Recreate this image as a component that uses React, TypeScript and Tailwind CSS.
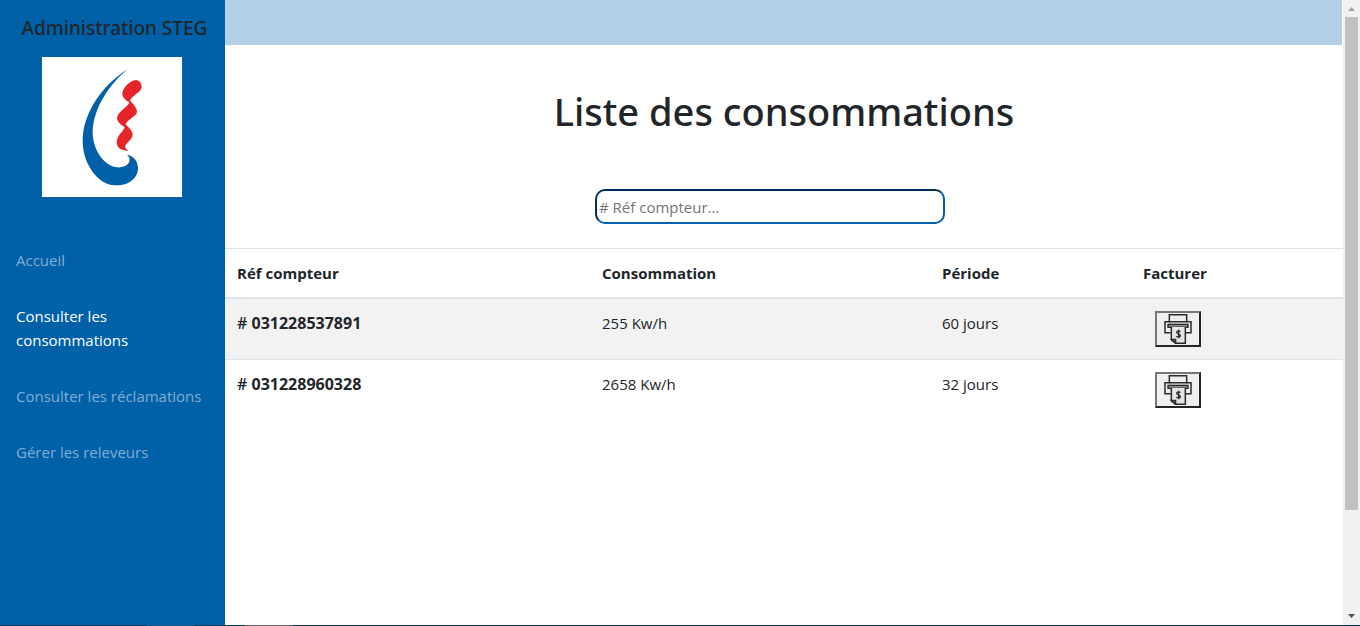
import React, { useState } from "react";
import clsx from "clsx";

type Consommation = { ref: string; valeur: string; periode: string };

const consommations: Consommation[] = [
  { ref: "031228537891", valeur: "255 Kw/h", periode: "60 jours" },
  { ref: "031228960328", valeur: "2658 Kw/h", periode: "32 jours" },
];

const liens = [
  { label: "Accueil", active: false },
  { label: "Consulter les consommations", active: true },
  { label: "Consulter les réclamations", active: false },
  { label: "Gérer les releveurs", active: false },
];

function Logo() {
  return (
    <svg viewBox="126 171 420 420" className="size-[140px] bg-white" role="img" aria-label="STEG">
      <path
        fill="#0060a8"
        d="M384 206C335 238 293 281 268 336C251 373 246 405 249 440C254 492 291 553 345 556C388 558 415 532 414 503C413 482 400 467 380 464C389 470 391 480 386 489C379 499 366 503 350 502C309 496 279 447 278 399C278 322 334 247 384 206Z"
      />
      <path
        fill="#e52528"
        d="M407 240C417 240 425 249 425 261C424 277 396 286 390 302C398 309 411 323 411 335C410 349 381 357 377 374C386 380 398 393 398 404C396 420 378 428 376 438C375 446 380 450 386 452C366 454 350 444 350 427C351 404 371 395 374 381C364 376 351 365 351 354C352 335 385 321 388 307C377 301 367 291 367 281C369 260 394 241 407 240Z"
      />
    </svg>
  );
}

function PrinterIcon() {
  return (
    <svg viewBox="39 27 90 90" className="size-[30px]" fill="none" stroke="#2b2b2b" strokeWidth="4.5" aria-hidden="true">
      <path d="M58 52V29H110V52" />
      <path d="M62 83H45V50H123V83H108" />
      <rect x="54" y="58" width="60" height="9" fill="#888" strokeWidth="4" />
      <path d="M64 66V105L77 115H106V66" fill="#e4e4e4" />
      <path d="M64 103H77V115Z" fill="#777" strokeWidth="4" />
      <path d="M91 80C88 76 80 77 80 82C80 88 91 86 91 92C91 97 82 98 79 93M86 74V100" strokeWidth="4" />
    </svg>
  );
}

function Scrollbar() {
  return (
    <div className="flex w-[17px] shrink-0 flex-col items-center bg-[#f1f1f1]" aria-hidden="true">
      <svg viewBox="0 0 17 17" className="h-[17px] w-full shrink-0">
        <path d="M5 11L8.500 7L12 11Z" fill="#a3a3a3" />
      </svg>
      <div className="flex w-full grow flex-col px-[2px]">
        <div className="h-5/6 bg-[#c1c1c1]" />
      </div>
      <svg viewBox="0 0 17 17" className="h-[17px] w-full shrink-0">
        <path d="M5 6L8.500 10L12 6Z" fill="#505050" />
      </svg>
    </div>
  );
}

export default function App() {
  const [filtre, setFiltre] = useState("");
  const lignes = consommations.filter((c) => c.ref.includes(filtre));

  return (
    <div className="flex h-screen flex-col overflow-hidden bg-white font-['Open_Sans','Noto_Sans',sans-serif] text-[15px] leading-6 text-[#212529]">
      <div className="flex min-h-0 grow">
        <aside className="flex w-[225px] shrink-0 flex-col bg-[#0060a8]">
          <h2 className="pt-4 pl-1 text-center font-['Noto_Sans',sans-serif] text-[19px] leading-6 font-medium whitespace-nowrap">Administration STEG</h2>
          <div className="mt-[17px] flex justify-center pr-px">
            <Logo />
          </div>
          <nav className="mt-[51px] flex flex-col gap-8 px-4">
            {liens.map((lien) => (
              <a key={lien.label} href="#" className={clsx(lien.active ? "text-white" : "text-white/50")}>
                {lien.label}
              </a>
            ))}
          </nav>
        </aside>

        <main className="min-w-0 grow">
          <div className="mr-px h-[45px] bg-[#b3cfe5]" />
          <h1 className="mt-[42px] text-center font-['Noto_Sans',sans-serif] text-[38px] leading-[48px] font-medium">Liste des consommations</h1>
          <div className="mt-[54px] flex justify-center pr-7">
            <input
              type="text"
              aria-label="Réf compteur"
              placeholder="# Réf compteur..."
              value={filtre}
              onChange={(e) => setFiltre(e.target.value)}
              className="h-[35px] w-[350px] rounded-[10px] border-2 border-t-[#003059] border-r-[#0060a8] border-b-[#0060a8] border-l-[#003059] bg-white px-[2px] placeholder:text-[#757575]"
            />
          </div>
          <table className="mt-6 w-full table-fixed border-collapse text-left">
            <thead>
              <tr className="h-[49px] border-t border-b-2 border-[#dee2e6]">
                <th className="w-[365px] px-3 font-bold">Réf compteur</th>
                <th className="w-[340px] px-3 font-bold">Consommation</th>
                <th className="w-[201px] px-3 font-bold">Période</th>
                <th className="w-[212px] px-3 font-bold">Facturer</th>
              </tr>
            </thead>
            <tbody>
              {lignes.map((c) => (
                <tr key={c.ref} className="border-t border-[#dee2e6] align-top odd:bg-[#f2f2f2]">
                  <th scope="row" className="p-3 text-base font-bold">
                    <span className="font-semibold"># </span>
                    {c.ref}
                  </th>
                  <td className="p-3">{c.valeur}</td>
                  <td className="p-3">{c.periode}</td>
                  <td className="py-3 pl-6">
                    <button
                      type="button"
                      aria-label={"Facturer " + c.ref}
                      className="flex h-9 w-[46px] items-center justify-center border-2 border-t-[#767676] border-r-[#212529] border-b-[#212529] border-l-[#767676] bg-[#efefef]"
                    >
                      <PrinterIcon />
                    </button>
                  </td>
                </tr>
              ))}
            </tbody>
          </table>
        </main>

        <Scrollbar />
      </div>
      <div className="flex h-px shrink-0 gap-[50px] bg-[#003a66] pl-[147px]">
        <div className="w-12 bg-[#1f4f75]" />
        <div className="w-12 bg-[#666]" />
      </div>
    </div>
  );
}
